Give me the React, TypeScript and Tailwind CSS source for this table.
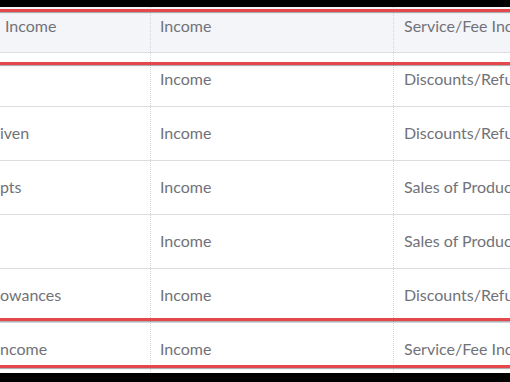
import React from 'react';

type Row = {
  name: string;
  type: string;
  detail: string;
};

const rows: Row[] = [
  { name: '', type: 'Income', detail: 'Discounts/Refunds Given' },
  { name: 'iven', type: 'Income', detail: 'Discounts/Refunds Given' },
  { name: 'pts', type: 'Income', detail: 'Sales of Product Income' },
  { name: '', type: 'Income', detail: 'Sales of Product Income' },
  { name: 'owances', type: 'Income', detail: 'Discounts/Refunds Given' },
  { name: 'ncome', type: 'Income', detail: 'Service/Fee Income' },
];

const cell = 'flex items-center overflow-hidden whitespace-nowrap pb-px';

const TableRow: React.FC<{ row: Row }> = ({ row }) => (
  <div className="flex h-[54px] shrink-0 border-b border-[#dcdde0]">
    <div className={`${cell} w-[151px] border-r border-dotted border-[#d6d7da]`}>{row.name}</div>
    <div className={`${cell} w-[243px] pl-[9px] border-r border-dotted border-[#d6d7da]`}>{row.type}</div>
    <div className={`${cell} flex-1 pl-[10px]`}>{row.detail}</div>
  </div>
);

// annotation stroke drawn over the table
const Mark: React.FC<{ top: string }> = ({ top }) => (
  <div className={`absolute left-0 right-0 ${top} h-[3px] bg-[#e4474c] shadow-[0_1px_1px_rgba(60,60,60,0.45)]`} />
);

export default function App() {
  return (
    <div className="relative w-[510px] h-[382px] overflow-hidden bg-white text-[16px] text-[#717278] font-['Lato',sans-serif]">
      <div className="flex flex-col">
        <div className="flex h-[53px] shrink-0 bg-[#f4f5f8] border-b border-[#dcdde0]">
          <div className={`${cell} w-[151px] pl-[5px] border-r border-dotted border-[#d6d7da]`}>Income</div>
          <div className={`${cell} w-[243px] pl-[9px] border-r border-dotted border-[#d6d7da]`}>Income</div>
          <div className={`${cell} flex-1 pl-[10px]`}>Service/Fee Income</div>
        </div>
        {rows.map((r, i) => (
          <TableRow key={i} row={r} />
        ))}
      </div>

      <Mark top="top-[9px]" />
      <Mark top="top-[62px]" />
      <Mark top="top-[318px]" />
      <Mark top="top-[365px]" />

      <div className="absolute left-0 right-0 top-0 h-[7px] bg-black" />
      <div className="absolute left-0 right-0 bottom-0 h-[9px] bg-black" />
    </div>
  );
}
